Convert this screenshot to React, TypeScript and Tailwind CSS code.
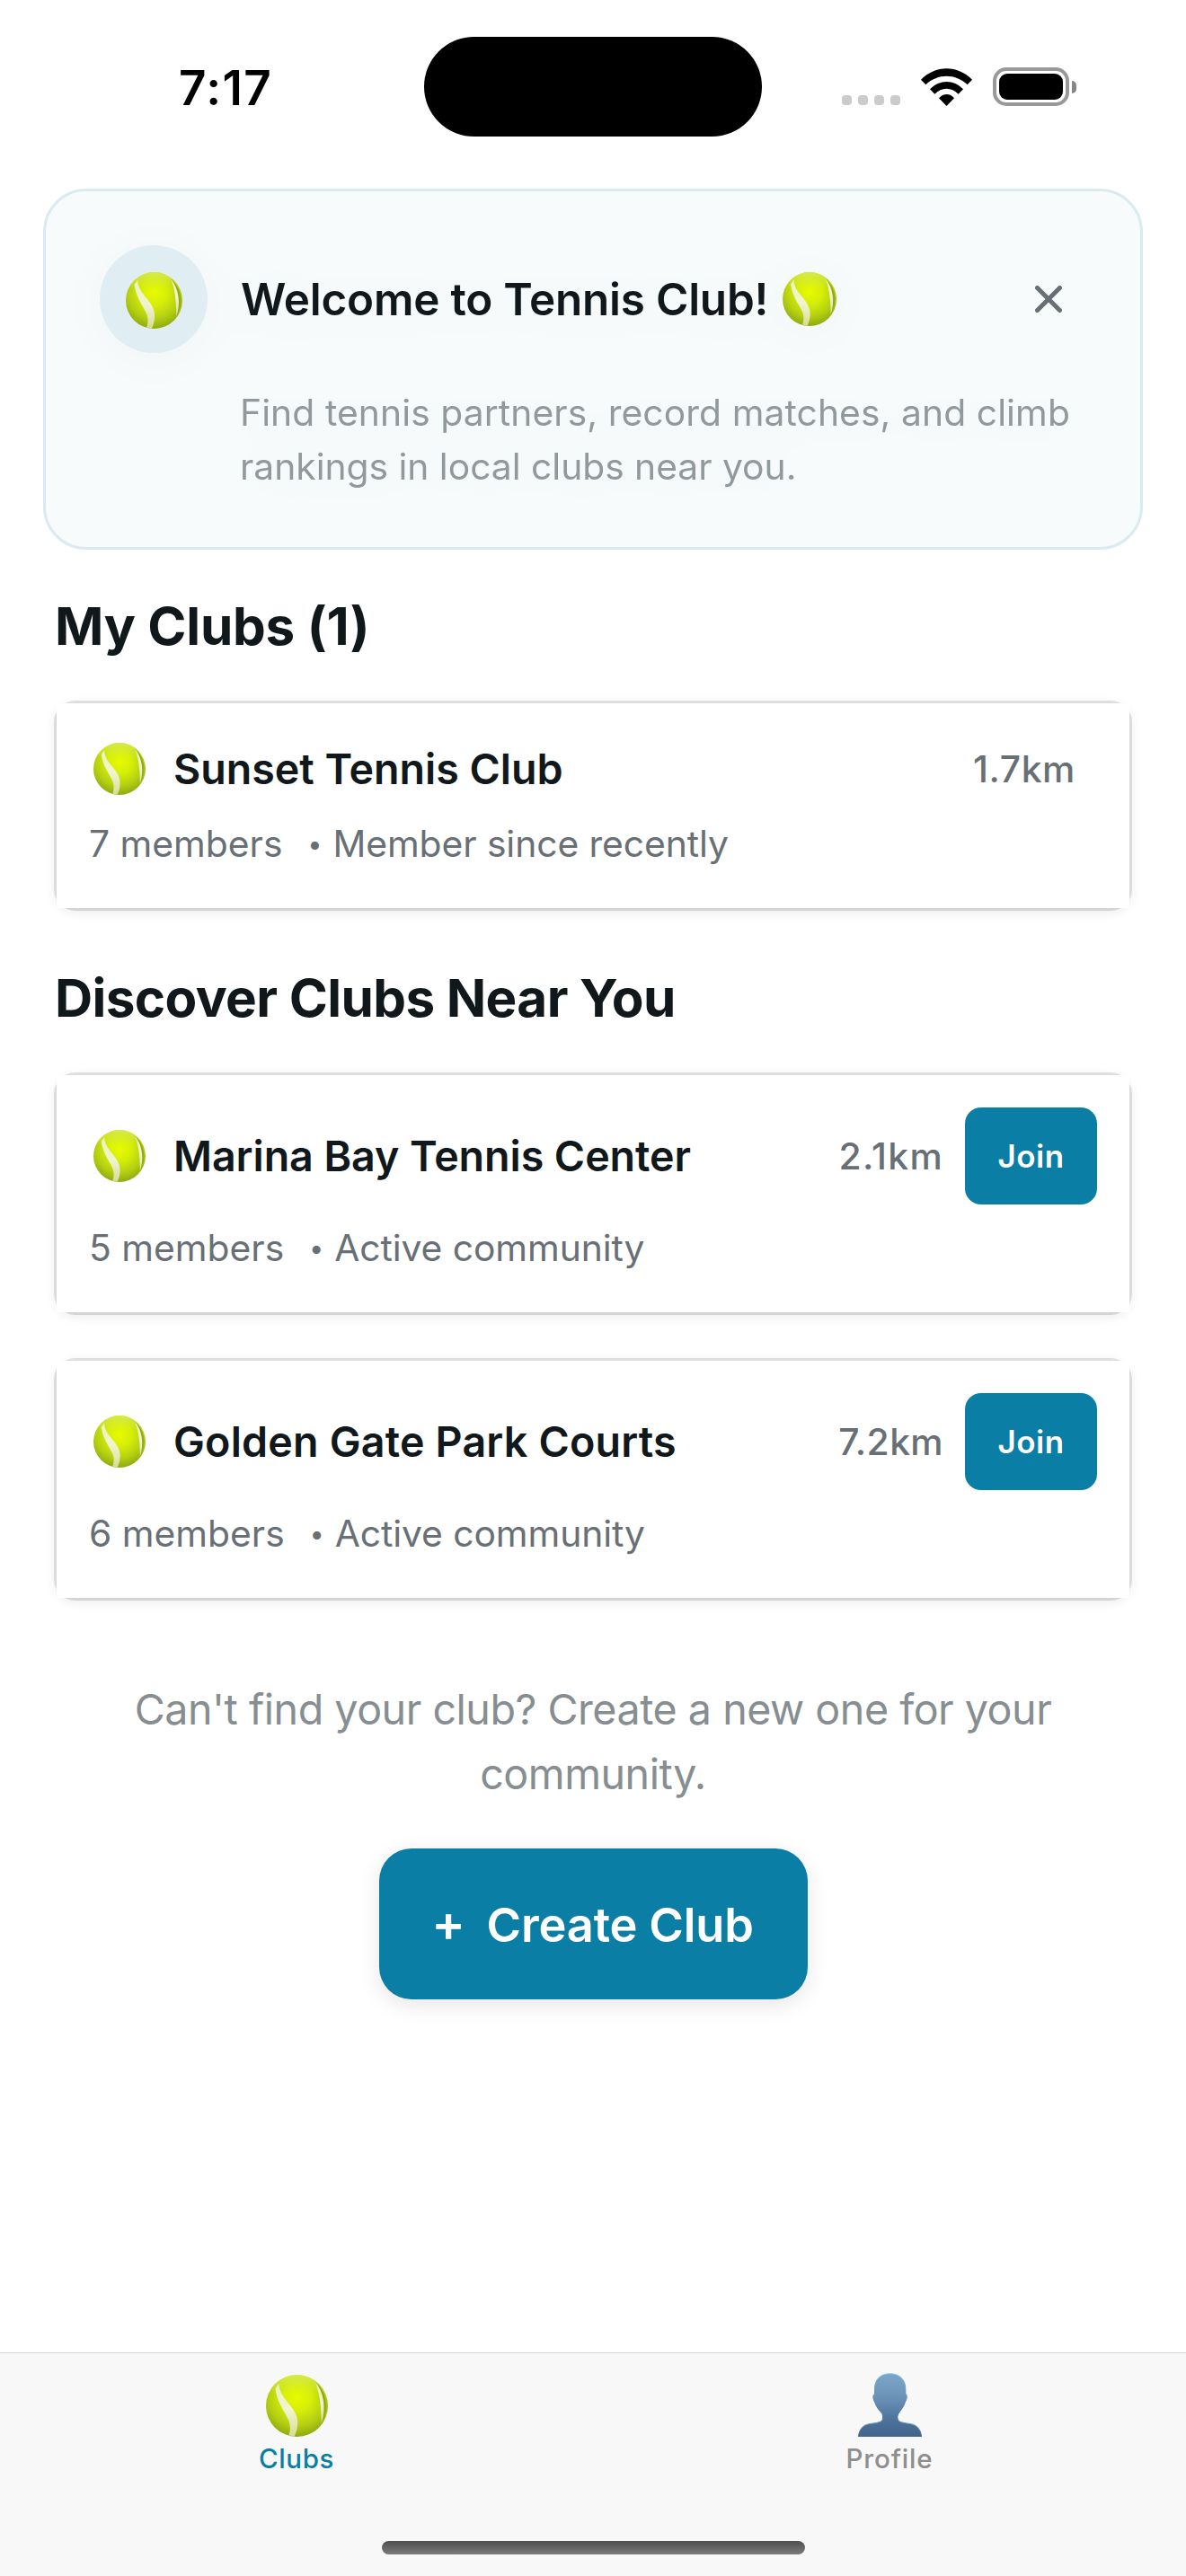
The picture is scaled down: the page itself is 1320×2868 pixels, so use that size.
import React, { useId } from "react";

function TennisBall({ className }: { className: string }) {
  const id = useId();
  return (
    <svg viewBox="0 0 206 206" className={className} aria-hidden="true">
      <defs>
        <radialGradient id={id + "g"} cx="0.5" cy="0.36" r="0.66">
          <stop offset="0" stopColor="#e6fb00" />
          <stop offset="0.35" stopColor="#d6ee08" />
          <stop offset="0.7" stopColor="#b4cf12" />
          <stop offset="1" stopColor="#8ba60f" />
        </radialGradient>
        <linearGradient id={id + "t"} x1="0" y1="0" x2="0" y2="1">
          <stop offset="0" stopColor="#d9ec5a" stopOpacity="0.85" />
          <stop offset="0.3" stopColor="#d9ec3a" stopOpacity="0" />
        </linearGradient>
        <linearGradient id={id + "s"} x1="0" y1="0" x2="0" y2="1">
          <stop offset="0" stopColor="#eef2bb" />
          <stop offset="0.5" stopColor="#f1f5d0" />
          <stop offset="1" stopColor="#d8dc96" />
        </linearGradient>
      </defs>
      <circle cx="103" cy="103" r="103" fill={`url(#${id}g)`} />
      <circle cx="103" cy="103" r="103" fill={`url(#${id}t)`} />
      <path d="M163 22C200 52 214 110 184 162C189 120 185 65 163 22Z" fill="#93ab10" />
      <path
        d="M43 29C44 56 58 74 76 96C96 120 107 140 105 165C104 181 100 194 94 205L76 201C82 184 82 169 76 153C65 124 38 96 31 46Z"
        fill={`url(#${id}s)`}
      />
      <path d="M163 22C193 58 201 115 184 162C184 115 181 65 163 22Z" fill={`url(#${id}s)`} />
    </svg>
  );
}

function Person({ className }: { className: string }) {
  return (
    <svg viewBox="0 0 212 213" className={className} aria-hidden="true">
      <defs>
        <linearGradient id="bust" x1="0" y1="0" x2="0" y2="1">
          <stop offset="0" stopColor="#7ca6c9" />
          <stop offset="0.35" stopColor="#6c94b9" />
          <stop offset="0.75" stopColor="#4d719b" />
          <stop offset="1" stopColor="#42638b" />
        </linearGradient>
        <linearGradient id="bustEdge" x1="0" y1="0" x2="0" y2="1">
          <stop offset="0" stopColor="#86c9e0" />
          <stop offset="0.25" stopColor="#6c9cc0" />
          <stop offset="0.7" stopColor="#4d719b" />
          <stop offset="0.8" stopColor="#6aa6c4" />
          <stop offset="1" stopColor="#42638b" />
        </linearGradient>
      </defs>
      <path
        d="M106 2C136 2 160 20 158 58L158 70C164 72 163 88 157 96C153 112 142 124 134 136C130 144 130 152 134 158C144 170 175 165 192 176C206 186 210 200 211 212L1 212C2 200 6 186 20 176C37 165 70 170 80 158C83 152 83 144 80 136C70 124 59 112 55 96C49 88 48 72 55 70L55 58C53 20 76 2 106 2Z"
        fill="url(#bust)"
        stroke="url(#bustEdge)"
        strokeWidth="3"
      />
    </svg>
  );
}

function StatusBar() {
  return (
    <header className="flex h-[210px] items-start pt-[41px]">
      <div className="flex h-[111px] w-[472px] shrink-0 items-center pt-[3px] pl-[199px] text-[53px] leading-none font-semibold tracking-[1.4px] text-black">
        7:17
      </div>
      <div className="h-[111px] w-[376px] shrink-0 rounded-full bg-black" />
      <div className="flex h-[111px] items-center pl-[89px]">
        <div className="mt-[30px] flex gap-[7px]">
          {[0, 1, 2, 3].map((i) => (
            <span key={i} className="size-[11px] rounded-[4px] bg-[#cbcbcb]" />
          ))}
        </div>
        <svg viewBox="0 0 171 126" className="ml-[23px] h-[42px] w-[57px]" aria-hidden="true">
          <path d="M0 38C48 -12 123 -12 171 38L155 55C115 17 56 17 16 55Z" />
          <path d="M30 70C62 36.5 110 36.5 141 70L125 86C103 62 68 62 46 86Z" />
          <path d="M60 100C74 83 98 83 111 100L85.500 126Z" />
        </svg>
        <div className="ml-[23px] h-[43px] w-[85px] rounded-[15px] border-4 border-[#999999] p-[3px]">
          <div className="h-full rounded-[9px] bg-black" />
        </div>
        <span className="ml-[3px] h-[14px] w-[5px] rounded-r-full bg-[#868686]" />
      </div>
    </header>
  );
}

function WelcomeBanner() {
  return (
    <section className="mx-12 h-[402px] rounded-[48px] border-3 border-[#d9eaf0] bg-[#f7fbfc] pt-[60px] pr-[60px] pl-[60px]">
      <div className="drop-shadow-[0_6px_24px_rgba(0,0,0,0.025)]">
        <div className="flex h-[120px] items-center">
          <div className="flex size-[120px] items-center justify-center rounded-full bg-[#e0eef3]">
            <TennisBall className="mt-[3px] size-[63px]" />
          </div>
          <h1 className="ml-[37px] text-[49.4px] leading-[60px] font-semibold tracking-[-0.19px] text-[#11181c]">
            Welcome to Tennis Club!
          </h1>
          <TennisBall className="ml-[16px] size-[60px]" />
          <svg
            viewBox="0 0 30 30"
            className="mr-[27px] ml-auto size-[30px]"
            fill="none"
            stroke="#687076"
            strokeWidth="5"
            strokeLinecap="round"
            aria-label="Dismiss"
          >
            <path d="M2.500 2.500L27.500 27.500M27.500 2.500L2.500 27.500" />
          </svg>
        </div>
        <p className="mt-[36px] pl-[156px] text-[40.8px] leading-[60px] whitespace-nowrap text-[#92999d]">
          <span className="block tracking-[0.08px]">Find tennis partners, record matches, and climb</span>
          <span className="block tracking-[-0.03px]">rankings in local clubs near you.</span>
        </p>
      </div>
    </section>
  );
}

type Club = {
  name: string;
  nameClass: string;
  distance: string;
  distanceClass: string;
  members: string;
  note: string;
  joinable?: boolean;
};

function ClubCard({ club }: { club: Club }) {
  return (
    <article className="rounded-[24px] border-3 border-x-[#dadbdb] border-t-[#dedfe0] border-b-[#d4d4d4] shadow-[0_3px_12px_rgba(0,0,0,0.07)]">
      <div className={club.joinable ? "h-[264px] bg-white px-9 pt-9" : "h-[228px] bg-white px-9 pt-9"}>
        <div className={club.joinable ? "flex h-[108px] items-center" : "flex h-[74px] items-center"}>
          <TennisBall className="ml-[5px] size-[58px]" />
          <h3 className={"ml-[31px] text-[46.6px] leading-[60px] font-semibold text-[#11181c] " + club.nameClass}>
            {club.name}
          </h3>
          <span className={"ml-auto text-[40.8px] leading-[60px] font-medium text-[#687076] " + club.distanceClass}>
            {club.distance}
          </span>
          {club.joinable && (
            <button className="ml-6 h-[108px] w-[147px] rounded-[18px] bg-[#0a7ea4] text-[34.9px] font-semibold tracking-[0.57px] text-white">
              Join
            </button>
          )}
        </div>
        <div
          className={
            club.joinable
              ? "mt-[18px] flex h-[60px] items-center text-[40.8px] leading-[60px] text-[#687076]"
              : "mt-[16px] flex h-[60px] items-center text-[40.8px] leading-[60px] text-[#687076]"
          }
        >
          <span>{club.members}</span>
          <span className="ml-[31px] flex w-[10px] justify-center pt-px text-[29px] leading-none">•</span>
          <span className="ml-[15px] tracking-[-0.08px]">{club.note}</span>
        </div>
      </div>
    </article>
  );
}

const myClubs: Club[] = [
  {
    name: "Sunset Tennis Club",
    nameClass: "tracking-[-0.03px]",
    distance: "1.7km",
    distanceClass: "tracking-[0.63px] mr-6",
    members: "7 members",
    note: "Member since recently",
  },
];

const nearbyClubs: Club[] = [
  {
    name: "Marina Bay Tennis Center",
    nameClass: "tracking-[-0.06px]",
    distance: "2.1km",
    distanceClass: "tracking-[1.3px]",
    members: "5 members",
    note: "Active community",
    joinable: true,
  },
  {
    name: "Golden Gate Park Courts",
    nameClass: "tracking-[0.19px]",
    distance: "7.2km",
    distanceClass: "tracking-[0.4px]",
    members: "6 members",
    note: "Active community",
    joinable: true,
  },
];

export default function App() {
  return (
    <div className="flex h-[2868px] w-[1320px] flex-col overflow-hidden bg-white font-['Inter',sans-serif]">
      <StatusBar />
      <main className="flex-1">
        <WelcomeBanner />
        <div className="px-[60px]">
          <h2 className="mt-[49px] mb-[47px] pl-px text-[58.4px] leading-[72px] font-bold tracking-[-0.22px] text-[#11181c]">
            My Clubs (1)
          </h2>
          {myClubs.map((club) => (
            <ClubCard key={club.name} club={club} />
          ))}
          <h2 className="mt-[61px] mb-[47px] pl-px text-[58.4px] leading-[72px] font-bold tracking-[-0.61px] text-[#11181c]">
            Discover Clubs Near You
          </h2>
          <div className="flex flex-col gap-12">
            {nearbyClubs.map((club) => (
              <ClubCard key={club.name} club={club} />
            ))}
          </div>
          <div className="mt-[85px] flex flex-col items-center">
            <p className="text-center text-[46.6px] leading-[72px] tracking-[-0.47px] whitespace-nowrap text-[#868e92]">
              Can't find your club? Create a new one for your
              <br />
              community.
            </p>
            <button className="mt-[47px] flex h-[168px] w-[477px] items-center rounded-[36px] bg-[#0a7ea4] pt-[2px] pl-[60px] text-[52.4px] leading-[72px] font-semibold text-white shadow-[0_6px_24px_rgba(0,0,0,0.1)]">
              <span className="mb-[4px] flex w-[35px] justify-center text-[56px]">+</span>
              <span className="ml-[25px] tracking-[-0.17px]">Create Club</span>
            </button>
          </div>
        </div>
      </main>
      <nav className="flex h-[249px] shrink-0 flex-col items-center border-t border-[#d6d6d6] bg-[#f8f8f8]">
        <div className="grid w-full grid-cols-2 pt-[22px] text-[29.5px] leading-[36px] font-medium">
          <div className="flex flex-col items-center text-[#0a7ea4]">
            <div className="flex h-[71px] items-end">
              <TennisBall className="size-[69px]" />
            </div>
            <span className="mt-[6px] tracking-[0.61px]">Clubs</span>
          </div>
          <div className="flex flex-col items-center text-[#8e8e8f]">
            <Person className="h-[71px] w-[71px]" />
            <span className="mt-[6px] tracking-[0.83px]">Profile</span>
          </div>
        </div>
        <div className="mt-auto mb-6 h-[15px] w-[471px] rounded-full bg-linear-to-b from-[#4f4f4f] to-[#7c7c7c]" />
      </nav>
    </div>
  );
}
